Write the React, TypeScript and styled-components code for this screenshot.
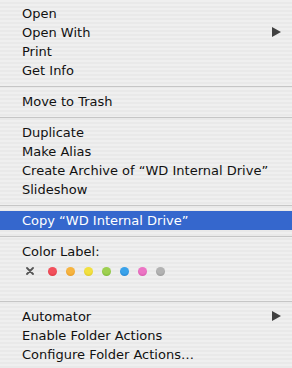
import React from "react";
import styled, { createGlobalStyle } from "styled-components";

const Global = createGlobalStyle`
  html, body { margin: 0; padding: 0; background: #ececec; }
  #root { width: 292px; }
`;

const Menu = styled.div`
  width: 292px;
  height: 368px;
  box-sizing: border-box;
  padding: 4px 0;
  background: repeating-linear-gradient(
    to bottom,
    #efefef 0px,
    #efefef 2px,
    #e9e9e9 2px,
    #e9e9e9 4px
  );
  font-family: "DejaVu Sans", "Liberation Sans", sans-serif;
  font-size: 13px;
  color: #111;
  overflow: hidden;
`;

const Item = styled.div<{ $active?: boolean }>`
  position: relative;
  height: 19px;
  line-height: 19px;
  padding-left: 22px;
  white-space: nowrap;
  background: ${(p) => (p.$active ? "#3567cd" : "transparent")};
  color: ${(p) => (p.$active ? "#ffffff" : "#111")};
`;

const Arrow = styled.span`
  position: absolute;
  right: 11px;
  top: 4px;
  width: 0;
  height: 0;
  border-top: 5px solid transparent;
  border-bottom: 5px solid transparent;
  border-left: 9px solid #404040;
`;

const Separator = styled.div`
  height: 12px;
  display: flex;
  align-items: center;
  &::after {
    content: "";
    display: block;
    width: 100%;
    height: 1px;
    background: #c6c6c6;
  }
`;

const ColorSection = styled.div`
  padding-bottom: 14px;
`;

const Swatches = styled.div`
  height: 20px;
  display: flex;
  align-items: center;
  padding-left: 26px;
  gap: 9px;
`;

const NoneMark = styled.svg`
  width: 8px;
  height: 8px;
  margin-right: 5px;
`;

const Dot = styled.span<{ $c: string; $d: string }>`
  width: 9px;
  height: 9px;
  border-radius: 50%;
  background: radial-gradient(
    circle at 50% 35%,
    ${(p) => p.$c} 0%,
    ${(p) => p.$c} 45%,
    ${(p) => p.$d} 100%
  );
`;

const colors: [string, string][] = [
  ["#f2505c", "#d42a36"],
  ["#f6b440", "#e08e18"],
  ["#f2e040", "#d4bc1c"],
  ["#9ed050", "#6eae2c"],
  ["#3aa2ea", "#1a78c8"],
  ["#ec74c4", "#cc4aa2"],
  ["#b2b2b2", "#8c8c8c"],
];

export default function App() {
  return (
    <>
      <Global />
      <Menu>
        <Item>Open</Item>
        <Item>
          Open With
          <Arrow />
        </Item>
        <Item>Print</Item>
        <Item>Get Info</Item>
        <Separator />
        <Item>Move to Trash</Item>
        <Separator />
        <Item>Duplicate</Item>
        <Item>Make Alias</Item>
        <Item>Create Archive of “WD Internal Drive”</Item>
        <Item>Slideshow</Item>
        <Separator />
        <Item $active>Copy “WD Internal Drive”</Item>
        <Separator />
        <ColorSection>
          <Item>Color Label:</Item>
          <Swatches>
            <NoneMark viewBox="0 0 8 8">
              <path
                d="M1 1 L7 7 M7 1 L1 7"
                stroke="#555"
                strokeWidth="1.8"
                strokeLinecap="round"
              />
            </NoneMark>
            {colors.map(([c, d]) => (
              <Dot key={c} $c={c} $d={d} />
            ))}
          </Swatches>
        </ColorSection>
        <Separator />
        <Item>
          Automator
          <Arrow />
        </Item>
        <Item>Enable Folder Actions</Item>
        <Item>Configure Folder Actions…</Item>
      </Menu>
    </>
  );
}
